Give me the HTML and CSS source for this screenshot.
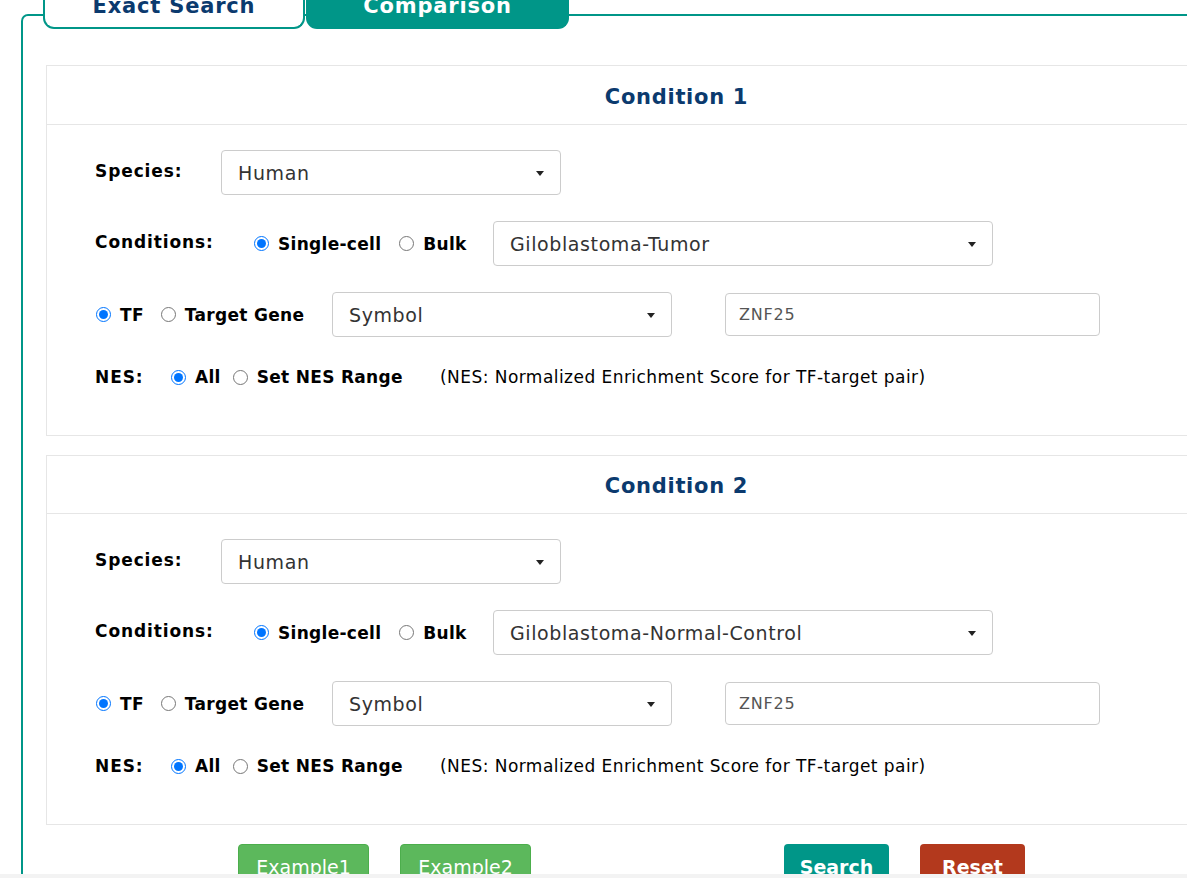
FILE: index.html
```html
<!DOCTYPE html>
<html>
<head>
<meta charset="utf-8">
<link rel="stylesheet" href="styles.css">
</head>
<body>
<div class="viewport">
  <div class="page">
    <div class="tabs">
      <div class="tab">Exact Search</div>
      <div class="tab tab-active">Comparison</div>
    </div>
    <div class="box">
      <div class="panel">
        <div class="panel-head">Condition 1</div>
        <div class="panel-body">
          <div class="row">
            <span class="lbl lbl-species">Species:</span>
            <div class="sel sel-species">Human<span class="caret"></span></div>
          </div>
          <div class="row">
            <span class="lbl lbl-cond">Conditions:</span>
            <div class="choices choices-cond">
              <label class="opt"><input type="radio" name="c1" checked><span>Single-cell</span></label>
              <label class="opt opt-bulk"><input type="radio" name="c1"><span>Bulk</span></label>
            </div>
            <div class="sel sel-cond">Giloblastoma-Tumor<span class="caret"></span></div>
          </div>
          <div class="row">
            <div class="choices choices-tf">
              <label class="opt"><input type="radio" name="t1" checked><span>TF</span></label>
              <label class="opt opt-target"><input type="radio" name="t1"><span>Target Gene</span></label>
            </div>
            <div class="sel sel-symbol">Symbol<span class="caret"></span></div>
            <div class="inp">ZNF25</div>
          </div>
          <div class="row row-nes">
            <span class="lbl lbl-nes">NES:</span>
            <div class="choices choices-nes">
              <label class="opt"><input type="radio" name="n1" checked><span>All</span></label>
              <label class="opt opt-range"><input type="radio" name="n1"><span>Set NES Range</span></label>
            </div>
            <span class="note">(NES: Normalized Enrichment Score for TF-target pair)</span>
          </div>
        </div>
      </div>
      <div class="panel panel-second">
        <div class="panel-head">Condition 2</div>
        <div class="panel-body">
          <div class="row">
            <span class="lbl lbl-species">Species:</span>
            <div class="sel sel-species">Human<span class="caret"></span></div>
          </div>
          <div class="row">
            <span class="lbl lbl-cond">Conditions:</span>
            <div class="choices choices-cond">
              <label class="opt"><input type="radio" name="c2" checked><span>Single-cell</span></label>
              <label class="opt opt-bulk"><input type="radio" name="c2"><span>Bulk</span></label>
            </div>
            <div class="sel sel-cond">Giloblastoma-Normal-Control<span class="caret"></span></div>
          </div>
          <div class="row">
            <div class="choices choices-tf">
              <label class="opt"><input type="radio" name="t2" checked><span>TF</span></label>
              <label class="opt opt-target"><input type="radio" name="t2"><span>Target Gene</span></label>
            </div>
            <div class="sel sel-symbol">Symbol<span class="caret"></span></div>
            <div class="inp">ZNF25</div>
          </div>
          <div class="row row-nes">
            <span class="lbl lbl-nes">NES:</span>
            <div class="choices choices-nes">
              <label class="opt"><input type="radio" name="n2" checked><span>All</span></label>
              <label class="opt opt-range"><input type="radio" name="n2"><span>Set NES Range</span></label>
            </div>
            <span class="note">(NES: Normalized Enrichment Score for TF-target pair)</span>
          </div>
        </div>
      </div>
      <div class="buttons">
        <div class="btn btn-green">Example1</div>
        <div class="btn btn-green btn-ex2">Example2</div>
        <div class="btn btn-teal">Search</div>
        <div class="btn btn-red">Reset</div>
      </div>
    </div>
  </div>
</div>
<div class="bottom-strip"></div>
</body>
</html>
```

FILE: styles.css
```css
html, body {
  margin: 0;
  padding: 0;
  background: #ffffff;
}
body {
  font-family: "DejaVu Sans", Verdana, sans-serif;
  color: #000;
}
.viewport {
  width: 1187px;
  height: 874px;
  overflow: hidden;
}
.page {
  padding-left: 21px;
  margin-top: -17px;
}
.tabs {
  display: flex;
  margin-left: 22px;
  height: 46px;
  position: relative;
  z-index: 1;
}
.tab {
  box-sizing: border-box;
  width: 262px;
  height: 46px;
  padding-top: 1px;
  border: 2px solid #009688;
  border-top: none;
  border-radius: 0 0 11px 11px;
  background: #fff;
  display: flex;
  align-items: center;
  justify-content: center;
  font-weight: bold;
  font-size: 21px;
  letter-spacing: 0.8px;
  color: #0b3a6e;
}
.tab-active {
  width: 263px;
  margin-left: 1px;
  background: #009688;
  color: #fff;
}
.box {
  box-sizing: border-box;
  width: 1311px;
  margin-top: -15px;
  border: 2px solid #009688;
  border-bottom: none;
  border-radius: 7px 0 0 0;
  padding: 49px 23px 0 23px;
  min-height: 900px;
}
.panel {
  border: 1px solid #e6e6e6;
}
.panel-second {
  margin-top: 19px;
}
.panel-second .panel-head {
  height: 58px;
}
.panel-head {
  box-sizing: border-box;
  height: 59px;
  padding-top: 3px;
  border-bottom: 1px solid #e6e6e6;
  display: flex;
  align-items: center;
  justify-content: center;
  font-weight: bold;
  font-size: 21px;
  letter-spacing: 0.7px;
  color: #0b3a6e;
}
.panel-body {
  padding: 25px 0 44px 48px;
  display: flex;
  flex-direction: column;
  gap: 26px;
}
.row {
  display: flex;
  align-items: center;
  height: 45px;
}
.row-nes {
  height: 28px;
}
.lbl {
  font-weight: bold;
  font-size: 17px;
  letter-spacing: 0.9px;
  margin-bottom: 4px;
  flex: none;
}
.lbl-species { width: 126px; }
.lbl-cond { width: 159px; }
.lbl-nes { width: 76px; margin-bottom: 1px; }
.choices {
  display: flex;
  align-items: center;
  flex: none;
}
.choices-cond { width: 239px; }
.choices-tf { width: 237px; padding-left: 1px; box-sizing: border-box; }
.choices-nes { width: 269px; }
.opt {
  display: flex;
  align-items: center;
  font-weight: bold;
  font-size: 17px;
  letter-spacing: 0.3px;
}
.opt input {
  width: 15px;
  height: 15px;
  margin: 0 9px 0 0;
}
.opt-bulk { margin-left: 18px; }
.opt-target { margin-left: 17px; }
.opt-range { margin-left: 12px; }
.sel {
  box-sizing: border-box;
  flex: none;
  height: 45px;
  border: 1px solid #cccccc;
  border-radius: 4px;
  padding-left: 16px;
  display: flex;
  align-items: center;
  font-size: 19px;
  letter-spacing: 0.6px;
  color: #333;
  position: relative;
}
.caret {
  position: absolute;
  right: 16px;
  top: 20px;
  width: 0;
  height: 0;
  border-left: 4.5px solid transparent;
  border-right: 4.5px solid transparent;
  border-top: 5px solid #222;
}
.sel-species { width: 340px; }
.sel-cond { width: 500px; }
.sel-symbol { width: 340px; }
.inp {
  box-sizing: border-box;
  flex: none;
  width: 375px;
  height: 43px;
  margin-left: 53px;
  border: 1px solid #cccccc;
  border-radius: 4px;
  padding-left: 13px;
  display: flex;
  align-items: center;
  font-size: 16px;
  letter-spacing: 0.8px;
  color: #555;
}
.note {
  font-size: 17px;
  letter-spacing: 0.45px;
  color: #000;
  white-space: nowrap;
}
.buttons {
  display: flex;
  margin-top: 19px;
  padding-left: 192px;
}
.btn {
  box-sizing: border-box;
  width: 131px;
  height: 46px;
  border-radius: 4px;
  color: #fff;
  font-size: 19px;
  display: flex;
  align-items: center;
  justify-content: center;
}
.btn-green { background: #5cb85c; border: 1px solid #4cae4c; }
.btn-ex2 { margin-left: 31px; }
.btn-teal {
  background: #009688;
  width: 105px;
  margin-left: 253px;
  font-weight: bold;
}
.btn-red {
  background: #b3391d;
  width: 105px;
  margin-left: 31px;
  font-weight: bold;
}
.bottom-strip {
  height: 4px;
  background: #f3f3f3;
}
```
